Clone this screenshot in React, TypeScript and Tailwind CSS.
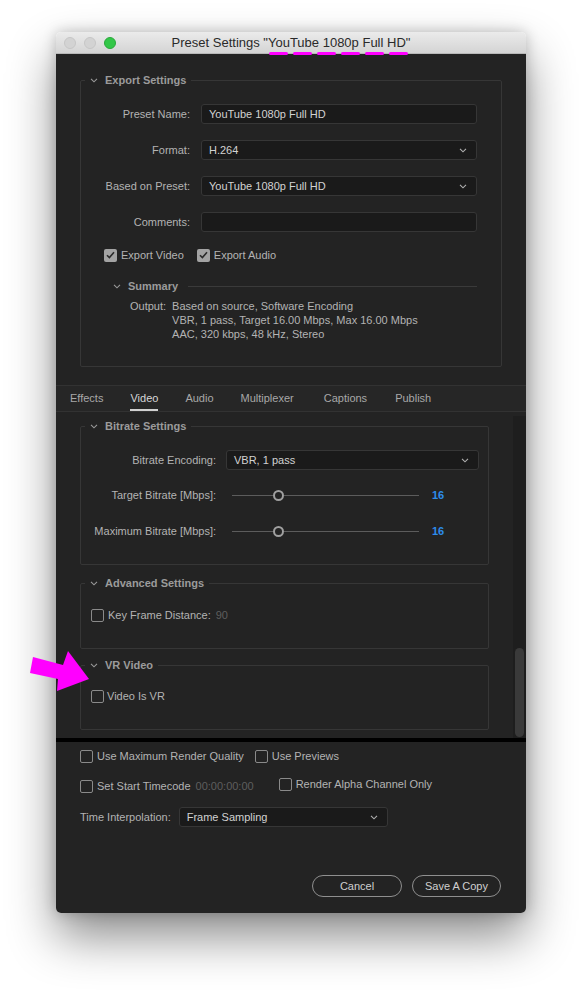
import React from "react";

function Chevron({ color = "#9a9a9a" }: { color?: string }) {
  return (
    <svg width="8" height="5" viewBox="0 0 8 5" className="shrink-0">
      <path d="M1 0.8l3 3 3-3" fill="none" stroke={color} strokeWidth="1.1" />
    </svg>
  );
}

function Checkbox({ checked = false, className = "" }: { checked?: boolean; className?: string }) {
  if (checked) {
    return (
      <span className={`w-[13px] h-[13px] rounded-[2px] bg-[#a3a3a3] flex items-center justify-center shrink-0 ${className}`}>
        <svg width="9" height="8" viewBox="0 0 9 8">
          <path d="M1 4.2l2.4 2.4L8 1.2" fill="none" stroke="#2a2a2a" strokeWidth="1.6" />
        </svg>
      </span>
    );
  }
  return <span className={`block w-[13px] h-[13px] rounded-[2px] border-[1.5px] border-[#8a8a8a] shrink-0 ${className}`} />;
}

function Group({ title, className = "", children }: { title: string; className?: string; children: React.ReactNode }) {
  return (
    <fieldset className={`border border-[#363636] rounded-[2px] ${className}`}>
      <legend className="ml-[4px] px-[5px] flex items-center gap-[7px] text-[11px] leading-[14px] font-bold text-[#9b9b9b]">
        <Chevron />
        {title}
      </legend>
      {children}
    </fieldset>
  );
}

function Field({ children, select = false, className = "" }: { children?: React.ReactNode; select?: boolean; className?: string }) {
  return (
    <div className={`h-[20px] bg-[#1a1a1a] border border-[#363636] rounded-[3px] flex items-center pl-[7px] pr-[9px] text-[11px] text-[#d2d2d2] ${className}`}>
      <span className="flex-1">{children}</span>
      {select && <Chevron color="#b0b0b0" />}
    </div>
  );
}

function Slider({ value }: { value: number }) {
  return (
    <div className="flex items-center">
      <div className="w-[193px] pl-[6px] flex items-center">
        <div className="w-[41px] h-px bg-[#5c5c5c]" />
        <div className="w-[11px] h-[11px] rounded-full border-2 border-[#a0a0a0] bg-[#232323] shrink-0" />
        <div className="w-[135px] h-px bg-[#5c5c5c]" />
      </div>
      <span className="ml-[13px] text-[11px] font-bold text-[#2d8ceb]">{value}</span>
    </div>
  );
}

const tabs = [
  { name: "Effects", cls: "" },
  { name: "Video", cls: "" },
  { name: "Audio", cls: "" },
  { name: "Multiplexer", cls: "" },
  { name: "Captions", cls: "ml-[3px]" },
  { name: "Publish", cls: "ml-[1px]" },
];

export default function App() {
  return (
    <div className="relative w-[582px] h-[994px] bg-white pt-[32px] pl-[56px] font-['Liberation_Sans',Arial,sans-serif] overflow-hidden">
      <div className="w-[470px] h-[881px] rounded-[5px] overflow-hidden flex flex-col shadow-[0_24px_48px_rgba(0,0,0,0.45),0_0_14px_rgba(0,0,0,0.22)]">
        {/* title bar */}
        <div className="h-[22px] bg-gradient-to-b from-[#ebebeb] to-[#d4d4d4] border-b border-[#b8b8b8] flex items-center px-[8px]">
          <div className="flex gap-[8px]">
            <span className="w-[12px] h-[12px] rounded-full bg-[#d3d3d3] border border-[#c6c6c6]" />
            <span className="w-[12px] h-[12px] rounded-full bg-[#d3d3d3] border border-[#c6c6c6]" />
            <span className="w-[12px] h-[12px] rounded-full bg-[#33c748] border border-[#2aa83b]" />
          </div>
          <div className="flex-1 text-center text-[13px] text-[#2a2a2a] pr-[52px] pt-[1px]">Preset Settings "YouTube 1080p Full HD"</div>
        </div>

        {/* body */}
        <div className="flex-1 bg-[#232323] flex flex-col">
          <Group title="Export Settings" className="mx-[24px] mt-[19px] pb-[25px]">
            <div className="flex flex-col gap-[16px] pt-[17px]">
              {[
                { label: "Preset Name:", value: "YouTube 1080p Full HD", select: false },
                { label: "Format:", value: "H.264", select: true },
                { label: "Based on Preset:", value: "YouTube 1080p Full HD", select: true },
                { label: "Comments:", value: "", select: false },
              ].map((r) => (
                <div key={r.label} className="flex items-center">
                  <span className="w-[109px] text-right text-[11px] text-[#b3b3b3]">{r.label}</span>
                  <Field select={r.select} className="ml-[11px] w-[276px]">
                    {r.value}
                  </Field>
                </div>
              ))}
              <div className="flex items-center pl-[23px] text-[11px] text-[#b3b3b3] h-[14px]">
                <Checkbox checked />
                <span className="ml-[4px]">Export Video</span>
                <Checkbox checked className="ml-[13px]" />
                <span className="ml-[4px]">Export Audio</span>
              </div>
            </div>
            <div className="flex items-center pl-[32px] pr-[24px] mt-[17px] h-[14px]">
              <Chevron />
              <span className="ml-[7px] text-[11px] font-bold text-[#9b9b9b]">Summary</span>
              <div className="flex-1 h-px bg-[#3a3a3a] ml-[10px]" />
            </div>
            <div className="flex mt-[6px] pl-[49px] text-[11px] leading-[14px] text-[#b3b3b3]">
              <span>Output:</span>
              <div className="ml-[6px] flex flex-col">
                <span>Based on source, Software Encoding</span>
                <span>VBR, 1 pass, Target 16.00 Mbps, Max 16.00 Mbps</span>
                <span>AAC, 320 kbps, 48 kHz, Stereo</span>
              </div>
            </div>
          </Group>

          {/* tabs */}
          <div className="mt-[18px] h-[27px] bg-[#262626] border-y border-[#323232] flex items-center pl-[14px] gap-[27px] text-[11px]">
            {tabs.map((t) => (
              <span
                key={t.name}
                className={
                  t.name === "Video"
                    ? "text-[#d6d6d6] h-full flex items-center border-b-2 border-[#d0d0d0] pt-[2px]"
                    : `text-[#a8a8a8] ${t.cls}`
                }
              >
                {t.name}
              </span>
            ))}
          </div>

          {/* scroll area */}
          <div className="h-[326px] flex">
            <div className="flex-1 flex flex-col pt-[7px]">
              <Group title="Bitrate Settings" className="mx-[24px] pb-[23px]">
                <div className="flex items-center pt-[17px]">
                  <span className="w-[135px] text-right text-[11px] text-[#b3b3b3]">Bitrate Encoding:</span>
                  <Field select className="ml-[10px] w-[253px] h-[19px]">
                    VBR, 1 pass
                  </Field>
                </div>
                <div className="flex items-center h-[20px] mt-[15px]">
                  <span className="w-[135px] text-right text-[11px] text-[#b3b3b3]">Target Bitrate [Mbps]:</span>
                  <div className="ml-[10px]">
                    <Slider value={16} />
                  </div>
                </div>
                <div className="flex items-center h-[20px] mt-[16px]">
                  <span className="w-[135px] text-right text-[11px] text-[#b3b3b3]">Maximum Bitrate [Mbps]:</span>
                  <div className="ml-[10px]">
                    <Slider value={16} />
                  </div>
                </div>
              </Group>

              <Group title="Advanced Settings" className="mx-[24px] mt-[11px] pt-[18px] pb-[26px]">
                <div className="flex items-center pl-[10px] h-[14px] text-[11px]">
                  <Checkbox />
                  <span className="ml-[4px] text-[#b3b3b3]">Key Frame Distance:</span>
                  <span className="ml-[5px] text-[#5e5e5e]">90</span>
                </div>
              </Group>

              <Group title="VR Video" className="mx-[24px] mt-[9px] pt-[17px] pb-[26px]">
                <div className="flex items-center pl-[10px] h-[14px] text-[11px]">
                  <Checkbox />
                  <span className="ml-[3px] text-[#b3b3b3]">Video Is VR</span>
                </div>
              </Group>
            </div>
            <div className="w-[13px] bg-[#1e1e1e] mt-[4px] flex flex-col justify-end items-center pb-[1px]">
              <div className="w-[9px] h-[89px] rounded-full bg-[#3a3a3a]" />
            </div>
          </div>

          <div className="h-[4px] bg-black" />

          {/* bottom options */}
          <div className="flex-1 flex flex-col pl-[24px] pr-[25px] pt-[7px] pb-[16px] text-[11px] text-[#b3b3b3]">
            <div className="flex items-center h-[14px]">
              <Checkbox />
              <span className="ml-[4px]">Use Maximum Render Quality</span>
              <Checkbox className="ml-[11px]" />
              <span className="ml-[4px]">Use Previews</span>
            </div>
            <div className="flex items-center h-[14px] mt-[16px]">
              <Checkbox />
              <span className="ml-[4px]">Set Start Timecode</span>
              <span className="ml-[5px] text-[#5e5e5e]">00:00:00:00</span>
              <div className="ml-[25px] flex items-center -mt-[4px]">
                <Checkbox />
                <span className="ml-[4px]">Render Alpha Channel Only</span>
              </div>
            </div>
            <div className="flex items-center mt-[14px]">
              <span>Time Interpolation:</span>
              <Field select className="ml-[8px] w-[209px] h-[19px]">
                Frame Sampling
              </Field>
            </div>
            <div className="mt-auto flex justify-end gap-[10px]">
              <button className="w-[90px] h-[22px] rounded-full border border-[#8f8f8f] text-[11px] text-[#cfcfcf]">Cancel</button>
              <button className="w-[89px] h-[22px] rounded-full border border-[#8f8f8f] text-[11px] text-[#cfcfcf]">Save A Copy</button>
            </div>
          </div>
        </div>
      </div>

      {/* annotation: dashes under the preset name in the title */}
      <div className="absolute left-[269px] top-[52px] flex gap-[5px]">
        {[0, 1, 2, 3, 4, 5].map((i) => (
          <span key={i} className="w-[19px] h-[3px] rounded-full bg-[#ff00ff]" />
        ))}
      </div>

      {/* annotation: arrow pointing at the VR checkbox */}
      <svg className="absolute left-0 top-0 pointer-events-none" width="100" height="700" viewBox="0 0 100 700">
        <polygon points="33,657 63,665 68,651 89,679 57,691 58,679 30,673" fill="#ff00ff" />
      </svg>
    </div>
  );
}
